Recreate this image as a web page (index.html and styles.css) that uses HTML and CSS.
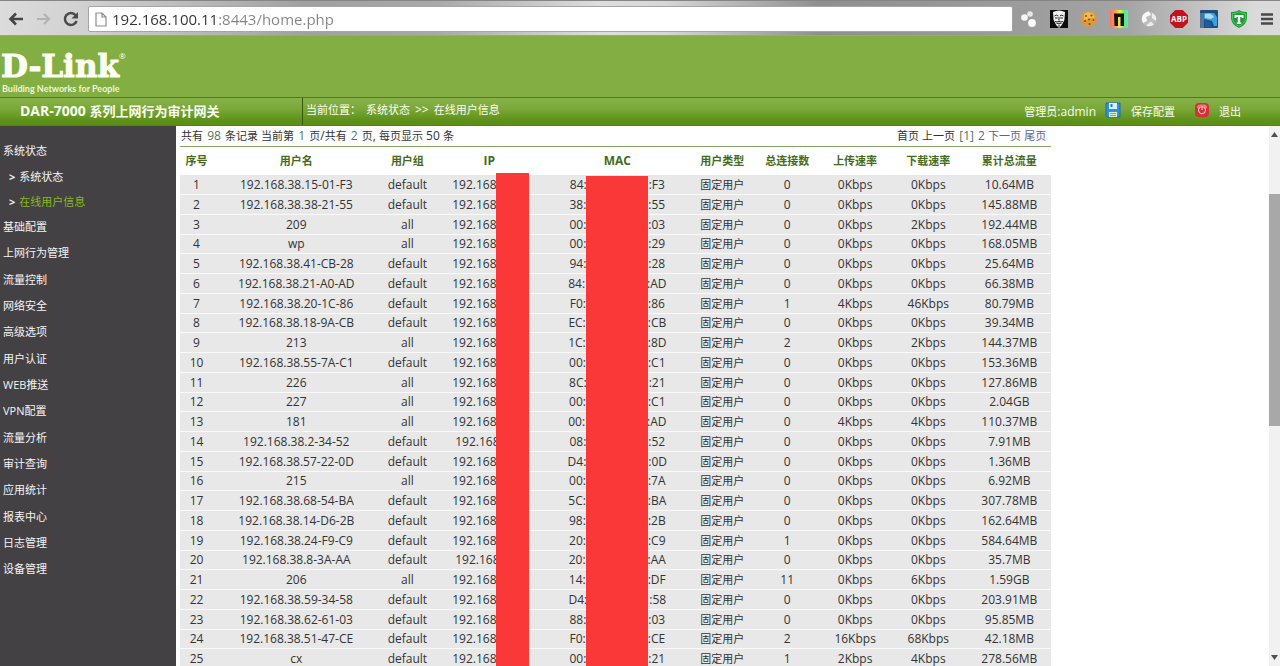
FILE: index.html
```html
<!DOCTYPE html>
<html lang="zh-CN">
<head>
<meta charset="utf-8">
<title>DAR-7000</title>
<link rel="stylesheet" href="styles.css">
</head>
<body>
<div class="toolbar">
  <button class="tool back" aria-label="后退"><svg width="16" height="14" viewBox="0 0 16 14"><path d="M8 1.5 2.5 7 8 12.5M3 7h12" fill="none" stroke="#454545" stroke-width="2.6"/></svg></button>
  <button class="tool forward" aria-label="前进"><svg width="16" height="14" viewBox="0 0 16 14"><path d="M8 2l5 5-5 5M13 7H1" fill="none" stroke="#b2b2b2" stroke-width="2.2"/></svg></button>
  <button class="tool reload" aria-label="刷新"><svg width="16" height="16" viewBox="0 0 16 16"><path d="M12.6 4.2A6 6 0 1 0 13.6 10" fill="none" stroke="#4a4a4a" stroke-width="2.5"/><path d="M15 1v6.5H8.5z" fill="#4a4a4a"/></svg></button>
  <label class="address">
    <svg width="12" height="15" viewBox="0 0 12 15"><path d="M1 1h6l4 4v9H1zM7 1v4h4" fill="#fff" stroke="#8c8c8c" stroke-width="1.2"/></svg>
    <input class="url" type="text" value="192.168.100.11:8443/home.php" aria-label="地址">
  </label>
  <div class="extensions">
    <button class="tool" aria-label="扩展"><svg width="18" height="18" viewBox="0 0 18 18"><circle cx="4.500" cy="7.500" r="3.300" fill="#f6f6f6"/><circle cx="10" cy="4" r="2.800" fill="#e8e8e8"/><circle cx="12" cy="13" r="3.900" fill="#fafafa"/></svg></button>
    <button class="tool" aria-label="面具"><svg width="18" height="18" viewBox="0 0 18 18"><path d="M0 0h18v18H0z" fill="#0b0b0b"/><path d="M3 2Q9-1 15 2l-.6 8Q12.500 15 9 18 5.500 15 3.600 10z" fill="#f2f2f2"/><path d="M4.500 6q2-1.800 3.700 0M9.800 6q2-1.800 3.700 0M5 8h2.700M10.300 8H13M5 11.600q2.300.8 4-.4 1.700 1.200 4 .4M6.500 13.300h5M9 14.500V17M9 7v3.500" fill="none" stroke="#222" stroke-width="1"/></svg></button>
    <button class="tool" aria-label="Cookie"><svg width="18" height="18" viewBox="0 0 18 18"><path d="M3 3.500 7 1l3 1.500L14 2l2.600 5-.3 5-3.300 4-5 1-5-2L1 10.500 1.200 6z" fill="#e09a34"/><path d="M4 4l4-2 5 1.500 2 4-6 1-5 2z" fill="#f0b95a"/><g fill="#8d4e12"><circle cx="6" cy="6" r="1"/><circle cx="11.500" cy="5.500" r="1.100"/><circle cx="5" cy="11" r="1.100"/><circle cx="9" cy="9.500" r="1"/><circle cx="13.500" cy="10" r="1"/><circle cx="9.500" cy="14" r="1.100"/></g></svg></button>
    <button class="tool" aria-label="彩色扩展"><svg width="18" height="18" viewBox="0 0 18 18"><defs><linearGradient id="rainbow"><stop offset="0" stop-color="#ff6d6d"/><stop offset=".3" stop-color="#f4a348"/><stop offset=".55" stop-color="#f1ee35"/><stop offset=".8" stop-color="#51ed7a"/><stop offset="1" stop-color="#64dfd0"/></linearGradient></defs><path d="M0 0h18v18H0z" fill="url(#rainbow)"/><path d="M4 3.500h10V16h-3.500V7H8v9H4.500z" fill="#111"/></svg></button>
    <button class="tool" aria-label="同步"><svg width="18" height="18" viewBox="0 0 18 18"><circle cx="9" cy="9" r="7.500" fill="#bdbdbd"/><path d="M9 1.500A7.500 7.500 0 0 0 3 13l4-2-1-4 5-2z" fill="#f8f8f8"/><path d="M12 3a7 7 0 0 1 4 8l-4-3zM6 15.500a7.500 7.500 0 0 0 8-1l-3-3z" fill="#eee"/></svg></button>
    <button class="tool" aria-label="ABP"><svg width="18" height="18" viewBox="0 0 18 18"><path d="M5.300 0h7.400L18 5.300v7.400L12.700 18H5.300L0 12.700V5.300z" fill="#c3131d"/><text x="9" y="12" text-anchor="middle" class="abp">ABP</text></svg></button>
    <button class="tool" aria-label="蓝色扩展"><svg width="18" height="18" viewBox="0 0 18 18"><rect width="18" height="18" rx="1" fill="#1d4e7d"/><path d="M0 3h4v15H0z" fill="#54759a"/><path d="M4 3h10l3 4v9h-3l-2-5-8-2z" fill="#3c9fdf"/><path d="M5 4q6-2 9 3l-3 2-6-1z" fill="#a9dcf7"/><path d="M5 10l5 2 2 5H5z" fill="#1a5c9c"/></svg></button>
    <button class="tool" aria-label="盾牌"><svg width="18" height="18" viewBox="0 0 18 18"><path d="M9 0q3 2.500 8 2v6q-.5 7-8 10Q1.500 15 1 8V2q5 .5 8-2z" fill="#1c9c32"/><path d="M9 1.800q3 2 6.500 1.800V8q-.5 5.500-6.500 8.200Q3 13.500 2.500 8V3.600Q6 3.800 9 1.800z" fill="none" stroke="#6ed67c" stroke-width=".7"/><path d="M4.500 5h9v3h-1.700l-.4-1H10.200v5.500h1V14H6.800v-1.500h1V7H6.600l-.4 1H4.500z" fill="#fff"/></svg></button>
    <button class="tool" aria-label="菜单"><svg width="14" height="14" viewBox="0 0 14 14"><path d="M1 2.500h12M1 7h12M1 11.500h12" stroke="#484848" stroke-width="2.400"/></svg></button>
  </div>
</div>

<header class="banner">
  <a class="logo" href="#"><span class="brand">D-Link<sup>®</sup></span><span class="tagline">Building Networks for People</span></a>
</header>

<nav class="titlebar">
  <h1 class="product">DAR-7000 <span class="cn">系列上网行为审计网关</span></h1>
  <p class="crumbs"><span class="cn">当前位置：</span><span class="cn">系统状态</span><span>&gt;&gt;</span><span class="cn">在线用户信息</span></p>
  <div class="account">
    <span><span class="cn">管理员</span>:admin</span>
    <a class="action save" href="#"><svg width="16" height="16" viewBox="0 0 16 16"><path d="M1 1h14v14H2.500L1 13.500z" fill="#2f92d8" stroke="#1a6cb0"/><path d="M4 1h8v6H4z" fill="#d8f0ff"/><path d="M5.500 2h2v3h-2z" fill="#2b7cb8"/><path d="M4 10h8v5H4z" fill="#d9efcf"/><path d="M5 11.500h6M5 13.500h6" stroke="#6ba5bd"/></svg><span class="cn">保存配置</span></a>
    <a class="action" href="#"><svg width="14" height="14" viewBox="0 0 14 14"><rect width="14" height="14" rx="4" fill="#d52f37"/><path d="M2 5q0-3.500 3-3.500h4q3 0 3 3.500z" fill="#ee7a78"/><path d="M4.700 4.500a3.500 3.500 0 1 0 4.600 0M7 3v4" fill="none" stroke="#ffc4c4" stroke-width="1.100"/></svg><span class="cn">退出</span></a>
  </div>
</nav>

<div class="workspace">
  <aside class="sidebar">
    <a class="group" href="#">系统状态</a>
    <a class="sub" href="#"><b>&gt;</b>系统状态</a>
    <a class="sub active" href="#"><b>&gt;</b>在线用户信息</a>
    <div class="groups">
      <a class="group" href="#">基础配置</a>
      <a class="group" href="#">上网行为管理</a>
      <a class="group" href="#">流量控制</a>
      <a class="group" href="#">网络安全</a>
      <a class="group" href="#">高级选项</a>
      <a class="group" href="#">用户认证</a>
      <a class="group" href="#">WEB推送</a>
      <a class="group" href="#">VPN配置</a>
      <a class="group" href="#">流量分析</a>
      <a class="group" href="#">审计查询</a>
      <a class="group" href="#">应用统计</a>
      <a class="group" href="#">报表中心</a>
      <a class="group" href="#">日志管理</a>
      <a class="group" href="#">设备管理</a>
    </div>
  </aside>

  <main class="content">
    <div class="listing">
      <div class="pager">
        <p><span class="cn">共有</span> <em>98</em> <span class="cn">条记录</span> <span class="cn">当前第</span> <em>1</em> <span class="cn">页</span>/<span class="cn">共有</span> <em>2</em> <span class="cn">页</span>, <span class="cn">每页显示</span> 50 <span class="cn">条</span></p>
        <p class="pages"><span class="cn">首页</span> <span class="cn">上一页</span> <em>[1]</em> <a href="#">2</a> <a class="cn" href="#">下一页</a> <a class="cn" href="#">尾页</a></p>
      </div>
      <div class="tablewrap">
      <table class="users">
        <colgroup><col class="c-no"><col class="c-name"><col class="c-group"><col class="c-ip"><col class="c-mac"><col class="c-type"><col class="c-conn"><col class="c-up"><col class="c-down"><col class="c-total"></colgroup>
        <thead><tr><th>序号</th><th>用户名</th><th>用户组</th><th class="latin">IP</th><th class="latin">MAC</th><th>用户类型</th><th>总连接数</th><th>上传速率</th><th>下载速率</th><th>累计总流量</th></tr></thead>
        <tbody>
          <tr><td>1</td><td>192.168.38.15-01-F3</td><td>default</td><td class="ip">192.168.</td><td>84:<i></i>:F3</td><td class="cn">固定用户</td><td>0</td><td>0Kbps</td><td>0Kbps</td><td>10.64MB</td></tr>
          <tr><td>2</td><td>192.168.38.38-21-55</td><td>default</td><td class="ip">192.168.</td><td>38:<i></i>:55</td><td class="cn">固定用户</td><td>0</td><td>0Kbps</td><td>0Kbps</td><td>145.88MB</td></tr>
          <tr><td>3</td><td>209</td><td>all</td><td class="ip">192.168.</td><td>00:<i></i>:03</td><td class="cn">固定用户</td><td>0</td><td>0Kbps</td><td>2Kbps</td><td>192.44MB</td></tr>
          <tr><td>4</td><td>wp</td><td>all</td><td class="ip">192.168.</td><td>00:<i></i>:29</td><td class="cn">固定用户</td><td>0</td><td>0Kbps</td><td>0Kbps</td><td>168.05MB</td></tr>
          <tr><td>5</td><td>192.168.38.41-CB-28</td><td>default</td><td class="ip">192.168.</td><td>94:<i></i>:28</td><td class="cn">固定用户</td><td>0</td><td>0Kbps</td><td>0Kbps</td><td>25.64MB</td></tr>
          <tr><td>6</td><td>192.168.38.21-A0-AD</td><td>default</td><td class="ip">192.168.</td><td>84:<i></i>:AD</td><td class="cn">固定用户</td><td>0</td><td>0Kbps</td><td>0Kbps</td><td>66.38MB</td></tr>
          <tr><td>7</td><td>192.168.38.20-1C-86</td><td>default</td><td class="ip">192.168.</td><td>F0:<i></i>:86</td><td class="cn">固定用户</td><td>1</td><td>4Kbps</td><td>46Kbps</td><td>80.79MB</td></tr>
          <tr><td>8</td><td>192.168.38.18-9A-CB</td><td>default</td><td class="ip">192.168.</td><td>EC:<i></i>:CB</td><td class="cn">固定用户</td><td>0</td><td>0Kbps</td><td>0Kbps</td><td>39.34MB</td></tr>
          <tr><td>9</td><td>213</td><td>all</td><td class="ip">192.168.</td><td>1C:<i></i>:8D</td><td class="cn">固定用户</td><td>2</td><td>0Kbps</td><td>2Kbps</td><td>144.37MB</td></tr>
          <tr><td>10</td><td>192.168.38.55-7A-C1</td><td>default</td><td class="ip">192.168.</td><td>00:<i></i>:C1</td><td class="cn">固定用户</td><td>0</td><td>0Kbps</td><td>0Kbps</td><td>153.36MB</td></tr>
          <tr><td>11</td><td>226</td><td>all</td><td class="ip">192.168.</td><td>8C:<i></i>:21</td><td class="cn">固定用户</td><td>0</td><td>0Kbps</td><td>0Kbps</td><td>127.86MB</td></tr>
          <tr><td>12</td><td>227</td><td>all</td><td class="ip">192.168.</td><td>00:<i></i>:C1</td><td class="cn">固定用户</td><td>0</td><td>0Kbps</td><td>0Kbps</td><td>2.04GB</td></tr>
          <tr><td>13</td><td>181</td><td>all</td><td class="ip">192.168.</td><td>00:<i></i>:AD</td><td class="cn">固定用户</td><td>0</td><td>4Kbps</td><td>4Kbps</td><td>110.37MB</td></tr>
          <tr><td>14</td><td>192.168.38.2-34-52</td><td>default</td><td class="ip short">192.168</td><td>08:<i></i>:52</td><td class="cn">固定用户</td><td>0</td><td>0Kbps</td><td>0Kbps</td><td>7.91MB</td></tr>
          <tr><td>15</td><td>192.168.38.57-22-0D</td><td>default</td><td class="ip">192.168.</td><td>D4:<i></i>:0D</td><td class="cn">固定用户</td><td>0</td><td>0Kbps</td><td>0Kbps</td><td>1.36MB</td></tr>
          <tr><td>16</td><td>215</td><td>all</td><td class="ip">192.168.</td><td>00:<i></i>:7A</td><td class="cn">固定用户</td><td>0</td><td>0Kbps</td><td>0Kbps</td><td>6.92MB</td></tr>
          <tr><td>17</td><td>192.168.38.68-54-BA</td><td>default</td><td class="ip">192.168.</td><td>5C:<i></i>:BA</td><td class="cn">固定用户</td><td>0</td><td>0Kbps</td><td>0Kbps</td><td>307.78MB</td></tr>
          <tr><td>18</td><td>192.168.38.14-D6-2B</td><td>default</td><td class="ip">192.168.</td><td>98:<i></i>:2B</td><td class="cn">固定用户</td><td>0</td><td>0Kbps</td><td>0Kbps</td><td>162.64MB</td></tr>
          <tr><td>19</td><td>192.168.38.24-F9-C9</td><td>default</td><td class="ip">192.168.</td><td>20:<i></i>:C9</td><td class="cn">固定用户</td><td>1</td><td>0Kbps</td><td>0Kbps</td><td>584.64MB</td></tr>
          <tr><td>20</td><td>192.168.38.8-3A-AA</td><td>default</td><td class="ip short">192.168</td><td>20:<i></i>:AA</td><td class="cn">固定用户</td><td>0</td><td>0Kbps</td><td>0Kbps</td><td>35.7MB</td></tr>
          <tr><td>21</td><td>206</td><td>all</td><td class="ip">192.168.</td><td>14:<i></i>:DF</td><td class="cn">固定用户</td><td>11</td><td>0Kbps</td><td>6Kbps</td><td>1.59GB</td></tr>
          <tr><td>22</td><td>192.168.38.59-34-58</td><td>default</td><td class="ip">192.168.</td><td>D4:<i></i>:58</td><td class="cn">固定用户</td><td>0</td><td>0Kbps</td><td>0Kbps</td><td>203.91MB</td></tr>
          <tr><td>23</td><td>192.168.38.62-61-03</td><td>default</td><td class="ip">192.168.</td><td>88:<i></i>:03</td><td class="cn">固定用户</td><td>0</td><td>0Kbps</td><td>0Kbps</td><td>95.85MB</td></tr>
          <tr><td>24</td><td>192.168.38.51-47-CE</td><td>default</td><td class="ip">192.168.</td><td>F0:<i></i>:CE</td><td class="cn">固定用户</td><td>2</td><td>16Kbps</td><td>68Kbps</td><td>42.18MB</td></tr>
          <tr><td>25</td><td>cx</td><td>default</td><td class="ip">192.168.</td><td>00:<i></i>:21</td><td class="cn">固定用户</td><td>1</td><td>2Kbps</td><td>4Kbps</td><td>278.56MB</td></tr>
        </tbody>
      </table>
      <div class="mask mask-ip"></div>
      <div class="mask mask-mac"></div>
      </div>
    </div>
  </main>

  <div class="scrollbar">
    <svg width="7" height="5" viewBox="0 0 7 5"><path d="M3.500 0 7 5H0z" fill="#505050"/></svg>
    <div class="thumb"></div>
    <svg width="7" height="5" viewBox="0 0 7 5"><path d="M3.500 5 0 0h7z" fill="#505050"/></svg>
  </div>
</div>
</body>
</html>
```

FILE: styles.css
```css
* { box-sizing: border-box; }
body {
  margin: 0;
  height: 100vh;
  display: flex;
  flex-direction: column;
  overflow: hidden;
  font: 12px/18px "Open Sans", "Noto Sans CJK SC", sans-serif;
  color: #333;
  background: #fff;
}
p, h1 { margin: 0; }
a { color: inherit; text-decoration: none; }
em { margin: 0 1px; font-style: normal; color: #4a7a5c; }
svg { display: block; flex: none; }
.cn { font-size: 11px; }

/* Browser toolbar */
.toolbar {
  flex: none;
  display: flex;
  align-items: center;
  height: 36px;
  padding: 2px 5px 0 8px;
  border-top: 1px solid #858585;
  border-bottom: 1px solid #9aa58c;
  background: linear-gradient(90deg, #dcdcdc, #d0d0d0 7%, #a0a0a0 24%, #a8a8a8 34%, #dedede 47%, #d6d6d6 52%, #8f8f8f 64%, #9c9c9c 80%, #a4a4a4 88%, #dadada 98%);
}
.tool { display: flex; padding: 0; border: 0; background: none; }
.forward { margin-left: 12px; }
.reload { margin-left: 11px; }
.address {
  flex: 1;
  display: flex;
  align-items: center;
  gap: 5px;
  height: 26px;
  margin-left: 9px;
  padding-left: 6px;
  border: 1px solid #a5a5a5;
  border-radius: 2px;
  background: #fff;
}
.url {
  flex: 1;
  min-width: 0;
  padding: 0;
  border: 0;
  font: 15px/22px "Open Sans", sans-serif;
  color: transparent;
  background: linear-gradient(90deg, #333 106px, #858585 106px);
  background-clip: text;
  -webkit-background-clip: text;
}
.extensions { display: flex; align-items: center; gap: 12px; margin: 0 1px 0 7px; }
.abp { font: bold 8px "Open Sans", sans-serif; fill: #fff; }

/* Banner */
.banner { flex: none; height: 61px; padding: 12px 1px 0; background: #83ae43; }
.logo { display: inline-flex; flex-direction: column; color: #fcfff2; }
.brand {
  display: flex;
  font: bold 31px/36px "DejaVu Serif", serif;
  -webkit-text-stroke: 1px #fcfff2;
}
.brand sup { font: 8px/16px "Open Sans", sans-serif; -webkit-text-stroke: 0; }
.tagline { padding-left: 1px; font: bold 9px/10px Lato, sans-serif; color: #eef7d8; }

.titlebar {
  flex: none;
  display: flex;
  align-items: stretch;
  height: 29px;
  border-top: 1px solid #527a22;
  border-bottom: 1px solid #557f2a;
  color: #fafdf0;
  background: linear-gradient(#87b24a, #7aa838 40%, #5c9018 85%, #5a8e14);
}
.product {
  width: 303px;
  padding-left: 20px;
  border-right: 1px solid #36580c;
  font-size: 14px;
  line-height: 26px;
}
.product .cn { font-size: 13px; }
.crumbs { display: flex; gap: 5px; padding-left: 3px; line-height: 24px; }
.account { display: flex; align-items: center; margin-left: auto; padding-right: 39px; }
.save { margin: 0 20px 0 9px; }
.action { display: flex; align-items: center; gap: 10px; }
.action svg { margin-bottom: 4px; }

/* Work area */
.workspace { flex: 1; min-height: 0; display: flex; }
.sidebar {
  width: 176px;
  padding-top: 12px;
  font-size: 11px;
  line-height: 26px;
  color: #f4f4f4;
  background: #444145;
}
.group, .sub { display: block; padding-left: 3px; }
.sub { padding-left: 9px; line-height: 25px; }
.sub b { margin-right: 4px; }
.active { color: #86b81c; }
.active b { color: #f4f4f4; }
.groups .group:nth-child(3n) { line-height: 27px; }

.content { flex: 1; padding-left: 4px; overflow: hidden; }
.listing { width: 80%; }
.pager {
  display: flex;
  justify-content: space-between;
  padding: 1px 5px 1px 1px;
  border-bottom: 1px solid #86a763;
}
.pages a { color: #5a6484; }
.tablewrap { position: relative; }
.users { width: 100%; table-layout: fixed; border-collapse: separate; border-spacing: 0; }
.users th { height: 28px; padding: 0; font-size: 11px; color: #456b1c; }
.users .latin { font-size: 12px; }
.users td {
  height: 20px;
  padding: 0;
  line-height: 18px;
  text-align: center;
  white-space: nowrap;
  border-bottom: 1px solid #fafafa;
  background: #e8e8e8;
}
.users tr:nth-child(4n) td { height: 19px; }
.users .ip { padding-left: 17px; text-align: left; }
.users .short { padding-left: 20px; }
.users i { display: inline-block; width: 62px; }
.c-no { width: 3.8%; }
.c-name { width: 19.1%; }
.c-group { width: 6.4%; }
.c-ip { width: 12.4%; }
.c-mac { width: 17%; }
.c-type { width: 7.1%; }
.c-conn { width: 7.8%; }
.c-up { width: 7.8%; }
.c-down { width: 9%; }
.c-total { width: 9.6%; }
.mask { position: absolute; bottom: 0; background: #fb3838; }
.mask-ip { top: 26px; left: 316px; width: 33px; }
.mask-mac { top: 29px; left: 406px; width: 62px; }

.scrollbar {
  display: flex;
  flex-direction: column;
  justify-content: space-between;
  align-items: center;
  width: 11px;
  padding: 6px 0;
  background: #f1f1f1;
}
.thumb { width: 100%; height: 44%; margin-bottom: 172px; background: #a9a8a9; }
```
